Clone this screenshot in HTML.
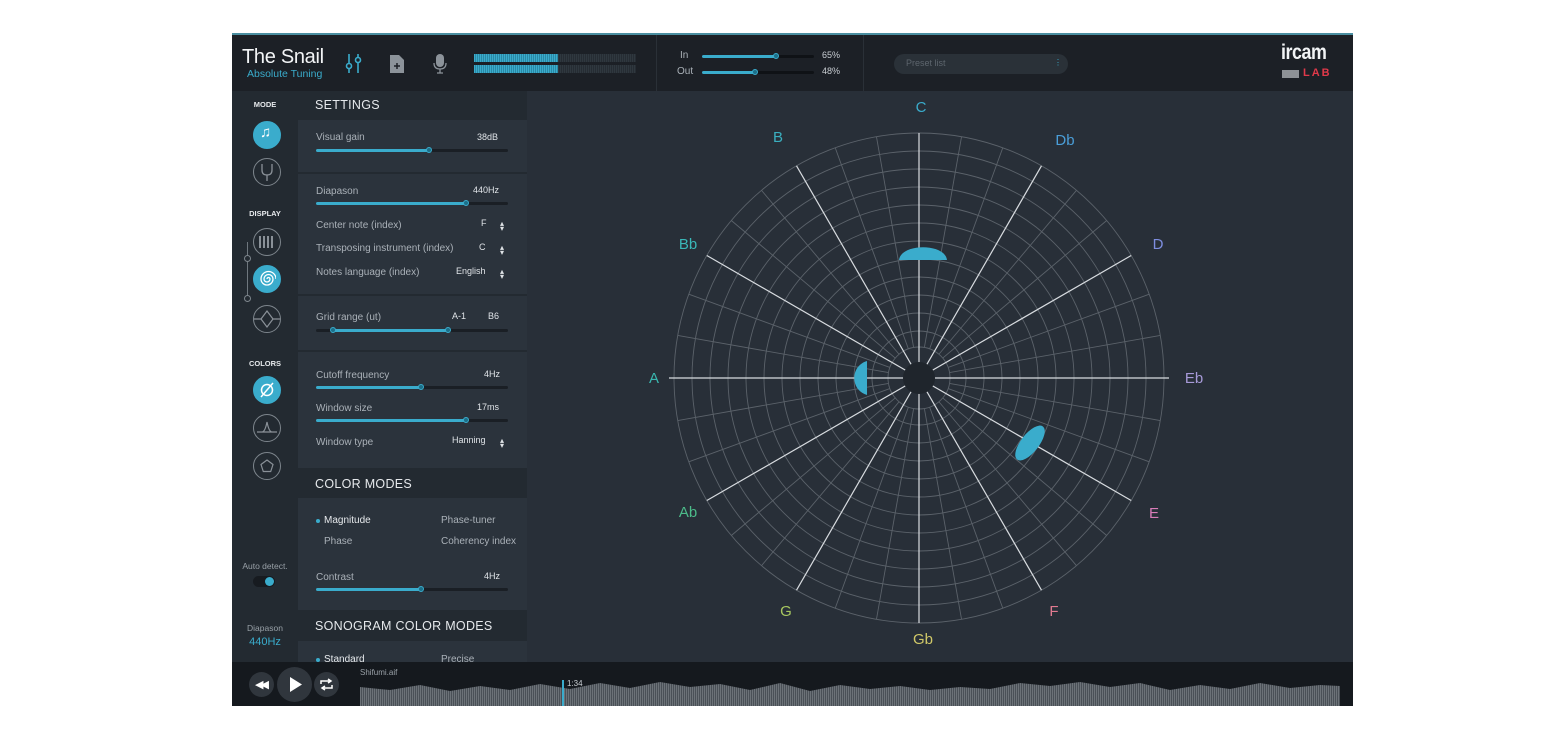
<!DOCTYPE html>
<html><head><meta charset="utf-8"><style>
*{margin:0;padding:0;box-sizing:border-box}
body{width:1568px;height:737px;background:#fff;position:relative;overflow:hidden;font-family:"Liberation Sans",sans-serif;color:#c9ced3}
.a{position:absolute}
#app{left:232px;top:33px;width:1121px;height:673px;background:#282f38;border-top:2px solid #4a8ea0;overflow:hidden}
.t{position:absolute;font-size:10px;color:#aab1b8;white-space:nowrap}
.v{position:absolute;font-size:9px;color:#e0e4e8;white-space:nowrap}
.trk{position:absolute;height:3px;background:#1a1f25;border-radius:2px}
.fil{position:absolute;left:0;top:0;height:3px;background:#3aaccc;border-radius:2px}
.knob{position:absolute;top:-2px;width:6px;height:6px;border-radius:50%;background:#1c6f88;border:1px solid #3aaccc}
.sec{position:absolute;left:66px;width:229px;background:#2b333c;border-bottom:2px solid #232a31}
.hd{position:absolute;left:66px;width:229px;background:#232a31;font-size:12.5px;color:#e6e9ec;padding-left:17px;letter-spacing:.3px}
.arr{position:absolute;font-size:8px;color:#dfe3e6;line-height:5px;width:6px;text-align:center}
.ic{position:absolute;left:21px;width:28px;height:28px;border-radius:50%;border:1.3px solid #7d858c}
.ic.on{background:#3aaccc;border-color:#3aaccc}
.lbl{position:absolute;left:0;width:66px;text-align:center;font-size:7.5px;font-weight:bold;color:#e6e9ec}
.btn{position:absolute;border-radius:50%;background:#30363d}
</style></head><body>
<div id="app" class="a">
<!-- header -->
<div class="a" style="left:0;top:0;width:1121px;height:56px;background:#1c2026"></div>
<div class="a" style="left:10px;top:11px;font-size:20px;color:#f2f4f6;letter-spacing:-.3px">The Snail</div>
<div class="a" style="left:15px;top:33px;font-size:10.5px;color:#3aaccc">Absolute Tuning</div>
<svg class="a" style="left:112px;top:18px" width="20" height="22"><g stroke="#3aaccc" stroke-width="1.6" fill="none"><line x1="5" y1="1" x2="5" y2="20"/><line x1="14" y1="1" x2="14" y2="20"/><circle cx="5" cy="13" r="2.5" fill="#1c2026"/><circle cx="14" cy="7" r="2.5" fill="#1c2026"/></g></svg>
<svg class="a" style="left:157px;top:19px" width="16" height="20"><path d="M1 1h9l5 5v13H1z" fill="#8c939a"/><path d="M8 9v6M5 12h6" stroke="#1c2026" stroke-width="1.5"/></svg>
<svg class="a" style="left:201px;top:18px" width="14" height="22"><rect x="3" y="1" width="8" height="13" rx="4" fill="#8c939a"/><path d="M1 10q0 6 6 6q6 0 6-6M7 16v4M4 20h6" stroke="#8c939a" stroke-width="1.3" fill="none"/></svg>
<div class="a" style="left:242px;top:19px;width:162px;height:8px;background:repeating-linear-gradient(90deg,#2f383f 0 1px,#262c33 1px 2px)"></div>
<div class="a" style="left:242px;top:19px;width:84px;height:8px;background:repeating-linear-gradient(90deg,#3aaccc 0 1px,#2a89a6 1px 2px)"></div>
<div class="a" style="left:242px;top:30px;width:162px;height:8px;background:repeating-linear-gradient(90deg,#2f383f 0 1px,#262c33 1px 2px)"></div>
<div class="a" style="left:242px;top:30px;width:84px;height:8px;background:repeating-linear-gradient(90deg,#3aaccc 0 1px,#2a89a6 1px 2px)"></div>
<div class="a" style="left:424px;top:0;width:1px;height:56px;background:#2a3037"></div>
<div class="a" style="left:631px;top:0;width:1px;height:56px;background:#2a3037"></div>
<div class="t" style="left:448px;top:15px">In</div>
<div class="t" style="left:445px;top:31px">Out</div>
<div class="trk" style="left:470px;top:20px;width:112px;background:#0f1216"><div class="fil" style="width:74px"></div><div class="knob" style="left:71px"></div></div>
<div class="trk" style="left:470px;top:36px;width:112px;background:#0f1216"><div class="fil" style="width:53px"></div><div class="knob" style="left:50px"></div></div>
<div class="v" style="left:590px;top:15px;color:#c9ced3">65%</div>
<div class="v" style="left:590px;top:31px;color:#c9ced3">48%</div>
<div class="a" style="left:662px;top:19px;width:174px;height:20px;border-radius:10px;background:#2a3138"></div>
<div class="t" style="left:674px;top:23px;font-size:9px;color:#5d656d">Preset list</div>
<div class="arr" style="left:822px;top:25px;color:#3aaccc">⋮</div>
<div class="a" style="left:1049px;top:6px;font-size:21px;font-weight:bold;color:#f2f4f6;letter-spacing:-.5px;transform:scaleX(.85);transform-origin:left">ircam</div>
<div class="a" style="left:1050px;top:35px;width:17px;height:8px;background:#8d9196"></div>
<div class="a" style="left:1071px;top:32px;font-size:11px;font-weight:bold;color:#e0394a;letter-spacing:2px">LAB</div>
<!-- left column -->
<div class="a" style="left:0;top:56px;width:66px;height:571px;background:#232a31"></div>
<div class="lbl" style="top:65px">MODE</div>
<div class="ic on" style="top:86px"></div><div class="a" style="left:28px;top:89px;font-size:15px;color:#fff">♫</div>
<div class="ic" style="top:123px"></div>
<svg class="a" style="left:27px;top:128px" width="16" height="18"><path d="M3 1v6q0 5 5 5q5 0 5-5V1M8 12v6" stroke="#8a9198" stroke-width="1.3" fill="none"/></svg>
<div class="lbl" style="top:174px">DISPLAY</div>
<div class="a" style="left:15px;top:207px;width:1px;height:60px;background:#6f777e"></div>
<div class="a" style="left:12px;top:220px;width:7px;height:7px;border-radius:50%;border:1px solid #7d858c;background:#232a31"></div>
<div class="a" style="left:12px;top:260px;width:7px;height:7px;border-radius:50%;border:1px solid #7d858c;background:#232a31"></div>
<div class="ic" style="top:193px"></div>
<svg class="a" style="left:25px;top:201px" width="20" height="12"><g stroke="#8a9198" stroke-width="2"><line x1="3" y1="0" x2="3" y2="12"/><line x1="7" y1="0" x2="7" y2="12"/><line x1="11" y1="0" x2="11" y2="12"/><line x1="15" y1="0" x2="15" y2="12"/></g></svg>
<div class="ic on" style="top:230px"></div>
<svg class="a" style="left:26px;top:235px" width="18" height="18"><path d="M9 9m0 0a1.5 1.5 0 0 1 3 0a3 3 0 0 1-6 0a4.5 4.5 0 0 1 9 0a6 6 0 0 1-12 0a7.5 7.5 0 0 1 15 0" stroke="#fff" stroke-width="1.3" fill="none"/></svg>
<div class="ic" style="top:270px"></div>
<svg class="a" style="left:22px;top:272px" width="26" height="24"><path d="M0 12h7l6-8l0 0l6 8h7M7 12l6 8l6-8" stroke="#8a9198" stroke-width="1.2" fill="none"/></svg>
<div class="lbl" style="top:324px">COLORS</div>
<div class="ic on" style="top:341px"></div>
<svg class="a" style="left:27px;top:347px" width="16" height="16"><circle cx="8" cy="8" r="5.5" stroke="#fff" stroke-width="1.5" fill="none"/><line x1="2" y1="15" x2="14" y2="1" stroke="#fff" stroke-width="1.5"/></svg>
<div class="ic" style="top:379px"></div>
<svg class="a" style="left:24px;top:384px" width="22" height="16"><path d="M1 13h5q3 0 5-10q2 10 5 10h5M5 13h12" stroke="#8a9198" stroke-width="1.2" fill="none"/></svg>
<div class="ic" style="top:417px"></div>
<svg class="a" style="left:26px;top:422px" width="18" height="18"><path d="M9 3l6 4.5l-2.3 7h-7.4l-2.3-7z" stroke="#8a9198" stroke-width="1.2" fill="none"/></svg>
<div class="a" style="left:0;top:526px;width:66px;text-align:center;font-size:8.5px;color:#98a0a7">Auto detect.</div>
<div class="a" style="left:21px;top:541px;width:22px;height:11px;border-radius:6px;background:#171b20"></div>
<div class="a" style="left:33px;top:542px;width:9px;height:9px;border-radius:50%;background:#3aaccc"></div>
<div class="a" style="left:0;top:588px;width:66px;text-align:center;font-size:8.5px;color:#98a0a7">Diapason</div>
<div class="a" style="left:0;top:601px;width:66px;text-align:center;font-size:11px;color:#3aaccc">440Hz</div>
<!-- settings panel -->
<div class="hd" style="top:56px;height:29px;line-height:29px">SETTINGS</div>
<div class="sec" style="top:85px;height:54px"></div>
<div class="t" style="left:84px;top:97px">Visual gain</div><div class="v" style="left:245px;top:97px">38dB</div>
<div class="trk" style="left:84px;top:114px;width:192px"><div class="fil" style="width:113px"></div><div class="knob" style="left:110px"></div></div>
<div class="sec" style="top:139px;height:122px"></div>
<div class="t" style="left:84px;top:151px">Diapason</div><div class="v" style="left:241px;top:150px">440Hz</div>
<div class="trk" style="left:84px;top:167px;width:192px"><div class="fil" style="width:150px"></div><div class="knob" style="left:147px"></div></div>
<div class="t" style="left:84px;top:185px">Center note (index)</div><div class="v" style="left:249px;top:183px">F</div><div class="arr" style="left:267px;top:186px">▴<br>▾</div>
<div class="t" style="left:84px;top:208px">Transposing instrument (index)</div><div class="v" style="left:247px;top:207px">C</div><div class="arr" style="left:267px;top:210px">▴<br>▾</div>
<div class="t" style="left:84px;top:232px">Notes language (index)</div><div class="v" style="left:224px;top:231px">English</div><div class="arr" style="left:267px;top:234px">▴<br>▾</div>
<div class="sec" style="top:261px;height:56px"></div>
<div class="t" style="left:84px;top:277px">Grid range (ut)</div><div class="v" style="left:220px;top:276px">A-1</div><div class="v" style="left:256px;top:276px">B6</div>
<div class="trk" style="left:84px;top:294px;width:192px"><div class="fil" style="left:16px;width:115px"></div><div class="knob" style="left:14px"></div><div class="knob" style="left:129px"></div></div>
<div class="sec" style="top:317px;height:118px"></div>
<div class="t" style="left:84px;top:335px">Cutoff frequency</div><div class="v" style="left:252px;top:334px">4Hz</div>
<div class="trk" style="left:84px;top:351px;width:192px"><div class="fil" style="width:105px"></div><div class="knob" style="left:102px"></div></div>
<div class="t" style="left:84px;top:368px">Window size</div><div class="v" style="left:245px;top:367px">17ms</div>
<div class="trk" style="left:84px;top:384px;width:192px"><div class="fil" style="width:150px"></div><div class="knob" style="left:147px"></div></div>
<div class="t" style="left:84px;top:402px">Window type</div><div class="v" style="left:220px;top:400px">Hanning</div><div class="arr" style="left:267px;top:403px">▴<br>▾</div>
<div class="hd" style="top:435px;height:28px;line-height:28px">COLOR MODES</div>
<div class="sec" style="top:463px;height:114px"></div>
<div class="a" style="left:84px;top:484px;width:4px;height:4px;border-radius:50%;background:#3aaccc"></div>
<div class="t" style="left:92px;top:480px;color:#e6e9ec">Magnitude</div>
<div class="t" style="left:209px;top:480px">Phase-tuner</div>
<div class="t" style="left:92px;top:501px">Phase</div>
<div class="t" style="left:209px;top:501px">Coherency index</div>
<div class="t" style="left:84px;top:537px">Contrast</div><div class="v" style="left:252px;top:536px">4Hz</div>
<div class="trk" style="left:84px;top:553px;width:192px"><div class="fil" style="width:105px"></div><div class="knob" style="left:102px"></div></div>
<div class="hd" style="top:577px;height:29px;line-height:29px">SONOGRAM COLOR MODES</div>
<div class="sec" style="top:606px;height:30px"></div>
<div class="a" style="left:84px;top:623px;width:4px;height:4px;border-radius:50%;background:#3aaccc"></div>
<div class="t" style="left:92px;top:619px;color:#e6e9ec">Standard</div>
<div class="t" style="left:209px;top:619px">Precise</div>
<!-- polar -->
<svg class="a" style="left:0;top:0" width="1121" height="627">
<g transform="translate(687,343)" fill="none">
<g stroke="#5b626a" stroke-width="0.9">
<circle r="245"/><circle r="227"/><circle r="209"/><circle r="191"/><circle r="173"/><circle r="155"/><circle r="137"/><circle r="119"/><circle r="101"/><circle r="83"/><circle r="65"/><circle r="47"/><circle r="31"/>
</g>
<g stroke="#5b626a" stroke-width="0.9">
<line x1="31" x2="245" transform="rotate(10)"/><line x1="31" x2="245" transform="rotate(20)"/><line x1="31" x2="245" transform="rotate(40)"/><line x1="31" x2="245" transform="rotate(50)"/><line x1="31" x2="245" transform="rotate(70)"/><line x1="31" x2="245" transform="rotate(80)"/><line x1="31" x2="245" transform="rotate(100)"/><line x1="31" x2="245" transform="rotate(110)"/><line x1="31" x2="245" transform="rotate(130)"/><line x1="31" x2="245" transform="rotate(140)"/><line x1="31" x2="245" transform="rotate(160)"/><line x1="31" x2="245" transform="rotate(170)"/><line x1="31" x2="245" transform="rotate(190)"/><line x1="31" x2="245" transform="rotate(200)"/><line x1="31" x2="245" transform="rotate(220)"/><line x1="31" x2="245" transform="rotate(230)"/><line x1="31" x2="245" transform="rotate(250)"/><line x1="31" x2="245" transform="rotate(260)"/><line x1="31" x2="245" transform="rotate(280)"/><line x1="31" x2="245" transform="rotate(290)"/><line x1="31" x2="245" transform="rotate(310)"/><line x1="31" x2="245" transform="rotate(320)"/><line x1="31" x2="245" transform="rotate(340)"/><line x1="31" x2="245" transform="rotate(350)"/>
</g>
<g stroke="#d8dce0" stroke-width="1.2">
<line x1="-250" x2="250"/><line x1="-245" x2="245" transform="rotate(30)"/><line x1="-245" x2="245" transform="rotate(60)"/><line x1="-245" x2="245" transform="rotate(90)"/><line x1="-245" x2="245" transform="rotate(120)"/><line x1="-245" x2="245" transform="rotate(150)"/>
</g>
<circle r="16" fill="#1f252c"/>
<path d="M-20 -118C-18 -135 26 -135 28 -118z" fill="#3aaccc" stroke="none"/>
<path d="M-52 -17C-69 -12 -69 12 -52 17z" fill="#3aaccc" stroke="none"/>
<ellipse cx="111" cy="65" rx="9" ry="21" transform="rotate(38 111 65)" fill="#3aaccc" stroke="none"/>
</g>
<g font-family="Liberation Sans" font-size="15" text-anchor="middle">
<text x="689" y="77" fill="#3aaccc">C</text>
<text x="546" y="107" fill="#3ab0c0">B</text>
<text x="833" y="110" fill="#4a9ed8">Db</text>
<text x="456" y="214" fill="#3ab8b8">Bb</text>
<text x="926" y="214" fill="#7e8ee0">D</text>
<text x="422" y="348" fill="#3ab8b0">A</text>
<text x="962" y="348" fill="#a79ad8">Eb</text>
<text x="456" y="482" fill="#4cbc8a">Ab</text>
<text x="922" y="483" fill="#d87cb8">E</text>
<text x="554" y="581" fill="#a8c860">G</text>
<text x="822" y="581" fill="#e07a90">F</text>
<text x="691" y="609" fill="#d0c868">Gb</text>
</g>
</svg>
<!-- transport -->
<div class="a" style="left:0;top:627px;width:1121px;height:46px;background:#15191e"></div>
<div class="btn" style="left:17px;top:637px;width:25px;height:25px"></div>
<div class="a" style="left:23px;top:643px;font-size:11px;color:#fff;letter-spacing:-3px">◀◀</div>
<div class="btn" style="left:45px;top:632px;width:35px;height:35px"></div>
<svg class="a" style="left:57px;top:641px" width="14" height="17"><path d="M1 1l12 7.5L1 16z" fill="#fff"/></svg>
<div class="btn" style="left:82px;top:637px;width:25px;height:25px"></div>
<svg class="a" style="left:87px;top:643px" width="15" height="13"><path d="M2 6V3h10M9 1l3 2l-3 2M13 7v3H3M6 12l-3-2l3-2" stroke="#fff" stroke-width="1.5" fill="none"/></svg>
<div class="a" style="left:128px;top:633px;font-size:8px;color:#9aa1a8">Shifumi.aif</div>
<svg class="a" style="left:128px;top:640px" width="980" height="33">
<defs><pattern id="wp" width="2" height="4" patternUnits="userSpaceOnUse"><rect width="1" height="4" fill="#6c7278"/><rect x="1" width="1" height="4" fill="#4a5057"/></pattern></defs>
<path d="M0 33V12L30 15L60 10L90 16L120 11L150 15L180 9L210 14L240 8L270 13L300 7L330 12L360 9L390 15L420 8L450 16L480 10L510 14L540 11L570 15L600 12L630 14L660 8L690 11L720 7L750 12L780 8L810 15L840 10L870 14L900 8L930 13L960 10L980 11V33z" fill="url(#wp)"/>
</svg>
<div class="a" style="left:330px;top:645px;width:2px;height:28px;background:#3aaccc"></div>
<div class="a" style="left:335px;top:644px;font-size:8px;color:#c9ced3">1:34</div>
</div>
</body></html>
